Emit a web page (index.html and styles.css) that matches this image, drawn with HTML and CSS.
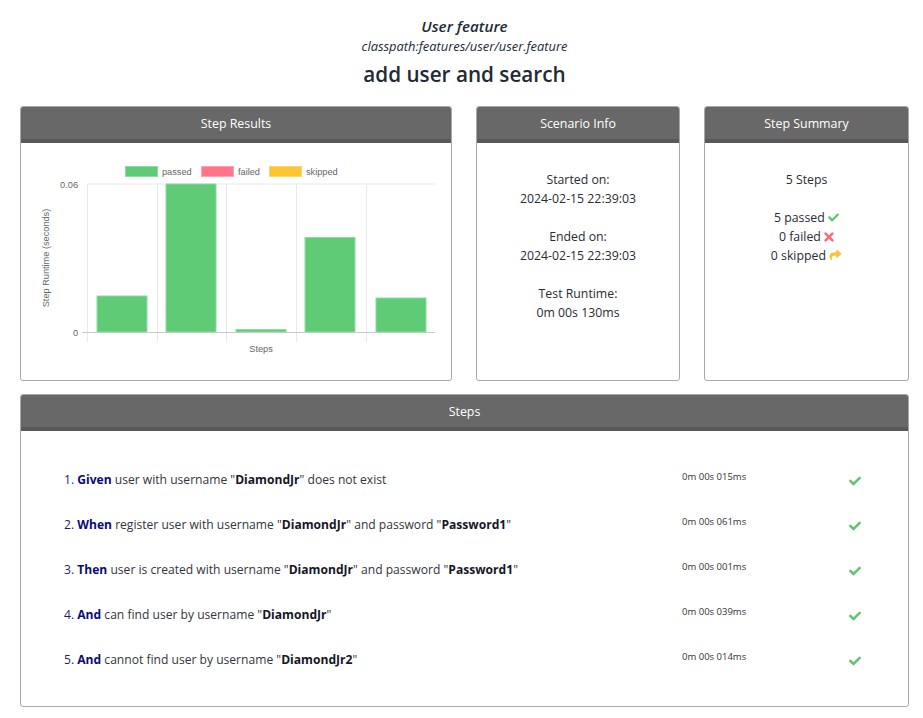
FILE: index.html
```html
<!DOCTYPE html>
<html lang="en">
<head>
<meta charset="utf-8">
<title>add user and search</title>
<link rel="stylesheet" href="styles.css">
</head>
<body>
<div class="page">
  <header class="titles">
    <h3 class="feature">User feature</h3>
    <div class="path">classpath:features/user/user.feature</div>
    <h2 class="scenario">add user and search</h2>
  </header>

  <div class="top-row">
    <section class="card">
      <div class="card-head">Step Results</div>
      <div class="card-body chart-body">
        <svg class="chart" width="430" height="237" viewBox="0 0 430 237">
          <g class="legend">
            <rect x="104.5" y="23.5" width="32" height="10" fill="#5fcb77" stroke="#8fdca2"/>
            <text x="141" y="32">passed</text>
            <rect x="180.5" y="23.5" width="32" height="10" fill="#ff7489" stroke="#ffa3b0"/>
            <text x="217" y="32">failed</text>
            <rect x="248.5" y="23.5" width="32" height="10" fill="#fbc632" stroke="#fdd872"/>
            <text x="285" y="32">skipped</text>
          </g>
          <g class="grid">
            <line x1="66" y1="41" x2="414" y2="41"/>
            <line x1="66.5" y1="41" x2="66.5" y2="199"/>
            <line x1="136.5" y1="41" x2="136.5" y2="199"/>
            <line x1="205.5" y1="41" x2="205.5" y2="199"/>
            <line x1="275.5" y1="41" x2="275.5" y2="199"/>
            <line x1="345.5" y1="41" x2="345.5" y2="199"/>
          </g>
          <g class="bars">
            <rect x="76" y="153" width="50" height="36"/>
            <rect x="145" y="41" width="50" height="148"/>
            <rect x="215" y="186.5" width="50" height="2.5"/>
            <rect x="284" y="94.5" width="50" height="94.5"/>
            <rect x="355" y="155" width="50" height="34"/>
          </g>
          <line class="axis" x1="61" y1="189.5" x2="414" y2="189.5"/>
          <g class="ticks">
            <text x="57" y="44.5" text-anchor="end">0.06</text>
            <text x="57" y="192.5" text-anchor="end">0</text>
          </g>
          <text class="axis-title" x="240" y="209" text-anchor="middle">Steps</text>
          <text class="axis-title" x="0" y="0" text-anchor="middle" transform="translate(28 115) rotate(-90)">Step Runtime (seconds)</text>
        </svg>
      </div>
    </section>

    <section class="card">
      <div class="card-head">Scenario Info</div>
      <div class="card-body info-body">
        <p>Started on:<br>2024-02-15 22:39:03</p>
        <p>Ended on:<br>2024-02-15 22:39:03</p>
        <p>Test Runtime:<br>0m 00s 130ms</p>
      </div>
    </section>

    <section class="card">
      <div class="card-head">Step Summary</div>
      <div class="card-body info-body">
        <p>5 Steps</p>
        <p>5 passed <svg class="ico" width="11" height="11" viewBox="0 0 512 512"><path fill="#5cc46e" d="M173.9 439.4l-166.4-166.4c-10-10-10-26.2 0-36.2l36.2-36.2c10-10 26.2-10 36.2 0L192 312.7 432.1 72.6c10-10 26.2-10 36.2 0l36.2 36.2c10 10 10 26.2 0 36.2l-294.4 294.4c-10 10-26.2 10-36.2 0z"/></svg><br>
        0 failed <svg class="ico" width="10" height="10" viewBox="0 0 10 10"><path d="M1.6 1.6L8.4 8.4M8.4 1.6L1.6 8.4" stroke="#f86d80" stroke-width="2.6" stroke-linecap="round"/></svg><br>
        0 skipped <svg class="ico" width="13" height="12" viewBox="0 0 512 512"><path fill="#f8c23a" d="M503.7 189.8L327.7 37.9C312.3 24.5 288 35.3 288 56v80.1C127.4 137.9 0 170.1 0 322.3c0 61.4 39.6 122.3 83.3 154.1 13.7 9.9 33.1-2.5 28.1-18.6C66.1 312.8 132.9 274.3 288 272.1V360c0 20.7 24.3 31.5 39.7 18.2l176-152c11.1-9.6 11.1-26.800 0-36.4z"/></svg></p>
      </div>
    </section>
  </div>

  <section class="card steps-card">
    <div class="card-head">Steps</div>
    <div class="card-body steps-body">
      <div class="step">
        <div class="step-text"><span class="num">1.</span> <b class="kw">Given</b> user with username "<b class="arg">DiamondJr</b>" does not exist</div>
        <div class="dur">0m 00s 015ms</div>
        <div class="status"><svg width="12" height="12" viewBox="0 0 512 512"><path fill="#5cc46e" d="M173.9 439.4l-166.4-166.4c-10-10-10-26.2 0-36.2l36.2-36.2c10-10 26.2-10 36.2 0L192 312.7 432.1 72.6c10-10 26.2-10 36.2 0l36.2 36.2c10 10 10 26.2 0 36.2l-294.4 294.4c-10 10-26.2 10-36.2 0z"/></svg></div>
      </div>
      <div class="step">
        <div class="step-text"><span class="num">2.</span> <b class="kw">When</b> register user with username "<b class="arg">DiamondJr</b>" and password "<b class="arg">Password1</b>"</div>
        <div class="dur">0m 00s 061ms</div>
        <div class="status"><svg width="12" height="12" viewBox="0 0 512 512"><path fill="#5cc46e" d="M173.9 439.4l-166.4-166.4c-10-10-10-26.2 0-36.2l36.2-36.2c10-10 26.2-10 36.2 0L192 312.7 432.1 72.6c10-10 26.2-10 36.2 0l36.2 36.2c10 10 10 26.2 0 36.2l-294.4 294.4c-10 10-26.2 10-36.2 0z"/></svg></div>
      </div>
      <div class="step">
        <div class="step-text"><span class="num">3.</span> <b class="kw">Then</b> user is created with username "<b class="arg">DiamondJr</b>" and password "<b class="arg">Password1</b>"</div>
        <div class="dur">0m 00s 001ms</div>
        <div class="status"><svg width="12" height="12" viewBox="0 0 512 512"><path fill="#5cc46e" d="M173.9 439.4l-166.4-166.4c-10-10-10-26.2 0-36.2l36.2-36.2c10-10 26.2-10 36.2 0L192 312.7 432.1 72.6c10-10 26.2-10 36.2 0l36.2 36.2c10 10 10 26.2 0 36.2l-294.4 294.4c-10 10-26.2 10-36.2 0z"/></svg></div>
      </div>
      <div class="step">
        <div class="step-text"><span class="num">4.</span> <b class="kw">And</b> can find user by username "<b class="arg">DiamondJr</b>"</div>
        <div class="dur">0m 00s 039ms</div>
        <div class="status"><svg width="12" height="12" viewBox="0 0 512 512"><path fill="#5cc46e" d="M173.9 439.4l-166.4-166.4c-10-10-10-26.2 0-36.2l36.2-36.2c10-10 26.2-10 36.2 0L192 312.7 432.1 72.6c10-10 26.2-10 36.2 0l36.2 36.2c10 10 10 26.2 0 36.2l-294.4 294.4c-10 10-26.2 10-36.2 0z"/></svg></div>
      </div>
      <div class="step">
        <div class="step-text"><span class="num">5.</span> <b class="kw">And</b> cannot find user by username "<b class="arg">DiamondJr2</b>"</div>
        <div class="dur">0m 00s 014ms</div>
        <div class="status"><svg width="12" height="12" viewBox="0 0 512 512"><path fill="#5cc46e" d="M173.9 439.4l-166.4-166.4c-10-10-10-26.2 0-36.2l36.2-36.2c10-10 26.2-10 36.2 0L192 312.7 432.1 72.6c10-10 26.2-10 36.2 0l36.2 36.2c10 10 10 26.2 0 36.2l-294.4 294.4c-10 10-26.2 10-36.2 0z"/></svg></div>
      </div>
    </div>
  </section>
</div>
</body>
</html>
```

FILE: styles.css
```css
* { box-sizing: border-box; }

body {
  margin: 0;
  background: #ffffff;
  font-family: "Open Sans", "Noto Sans", sans-serif;
  color: #333333;
}

.page {
  width: 889px;
  margin-left: 20px;
  padding-top: 16px;
}

.titles {
  text-align: center;
  color: #222a35;
  margin-bottom: 18px;
}

.feature {
  margin: 0;
  font-size: 15.2px;
  line-height: 20px;
  font-style: italic;
  font-weight: 600;
}

.path {
  margin-top: 2px;
  font-size: 12.9px;
  line-height: 16px;
  font-style: italic;
}

.scenario {
  margin: 6px 0 0;
  font-size: 20.7px;
  line-height: 28px;
  font-weight: 600;
}

.top-row {
  display: grid;
  grid-template-columns: 432px 204px 205px;
  column-gap: 24px;
  height: 275px;
  margin-bottom: 13px;
}

.card {
  border: 1px solid #a8a8a8;
  border-radius: 3px;
  background: #ffffff;
  display: flex;
  flex-direction: column;
  overflow: hidden;
}

.card-head {
  height: 36px;
  background: #686868;
  border-bottom: 4px solid #585858;
  color: #ffffff;
  font-size: 12.4px;
  line-height: 34px;
  text-align: center;
}

.card-body {
  flex: 1;
}

.chart-body {
  display: flex;
}

.chart {
  display: block;
}

.chart text {
  font-family: "Liberation Sans", Arial, sans-serif;
  font-size: 9.2px;
  fill: #666666;
}

.grid line {
  stroke: #e9e9e9;
  stroke-width: 1;
}

.axis {
  stroke: #c9c9c9;
  stroke-width: 1.2;
}

.bars rect {
  fill: #5fcb77;
  stroke: #8edba0;
  stroke-width: 1;
}

.info-body {
  padding-top: 27px;
  text-align: center;
  font-size: 12.3px;
  line-height: 19px;
  color: #2b2b33;
}

.info-body p {
  margin: 0 0 19px;
}

.ico {
  vertical-align: -1px;
}

.steps-card {
  height: 313px;
}

.steps-body {
  padding: 26px 0 0 43px;
}

.step {
  display: grid;
  grid-template-columns: 618px 167px 20px;
  height: 45px;
  align-items: center;
}

.step-text {
  font-size: 12.1px;
  color: #34343c;
}

.num {
  color: #1d1d60;
}

.kw {
  color: #0b0b7a;
  font-weight: 700;
}

.arg {
  color: #161626;
  font-weight: 700;
}

.dur {
  font-size: 9.5px;
  color: #333333;
  margin-top: -6px;
}

.status {
  display: flex;
  align-items: center;
  margin-top: 2px;
}
```
